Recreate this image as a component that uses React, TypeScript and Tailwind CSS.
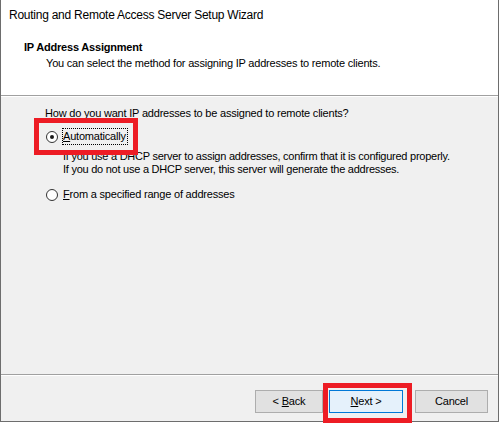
import React from 'react';

const font = { fontFamily: '"Liberation Sans", Arial, sans-serif' };

function Radio({ checked }: { checked?: boolean }) {
  return (
    <span className="flex h-[12px] w-[12px] shrink-0 items-center justify-center rounded-full border border-[#333333] bg-white">
      {checked && <span className="h-[4px] w-[4px] rounded-full bg-[#1a1a1a]" />}
    </span>
  );
}

function Btn({ w, children, primary }: { w: string; children: React.ReactNode; primary?: boolean }) {
  return (
    <div
      className={
        'flex h-[23px] items-center justify-center border text-[11px] tracking-[-0.2px] text-black ' +
        w +
        (primary ? ' border-[#0078d7] bg-[#e5f1fb]' : ' border-[#adadad] bg-[#e1e1e1]')
      }
    >
      {children}
    </div>
  );
}

export default function App() {
  return (
    <div className="relative h-[423px] w-[500px] overflow-hidden bg-white" style={font}>
      <div className="flex h-[422px] w-[499px] flex-col border-x border-b border-[#6d6d6d] bg-[#f0f0f0]">
        {/* title bar */}
        <div className="flex h-[30px] items-center bg-white pl-[8px] text-[12px] tracking-[-0.25px] text-black">
          Routing and Remote Access Server Setup Wizard
        </div>

        {/* header */}
        <div className="h-[65px] bg-white pl-[23px] pt-[9px] text-[11px] leading-[16px] tracking-[-0.2px] text-black">
          <div className="font-bold">IP Address Assignment</div>
          <div className="pl-[22px]">You can select the method for assigning IP addresses to remote clients.</div>
        </div>
        <div className="h-px bg-[#a0a0a0]" />
        <div className="h-px bg-white" />

        {/* body */}
        <div className="flex flex-1 flex-col pl-[44px] pt-[9px] text-[11px] tracking-[-0.2px] text-black">
          <div className="leading-[14px]">How do you want IP addresses to be assigned to remote clients?</div>
          <div className="mt-[8px] flex h-[17px] items-center">
            <span className="ml-px"><Radio checked /></span>
            <span className="ml-[4px] border border-dotted border-black pr-px leading-[15px]">
              <span className="underline">A</span>utomatically
            </span>
          </div>
          <div className="mt-[5px] pl-[18px] leading-[13px] tracking-[-0.25px]">
            <div>If you use a DHCP server to assign addresses, confirm that it is configured properly.</div>
            <div>If you do not use a DHCP server, this server will generate the addresses.</div>
          </div>
          <div className="mt-[10px] flex h-[17px] items-center">
            <span className="ml-px"><Radio /></span>
            <span className="ml-[5px] leading-[15px]">
              <span className="underline">F</span>rom a specified range of addresses
            </span>
          </div>
        </div>

        <div className="h-px bg-[#a0a0a0]" />
        <div className="h-px bg-white" />

        {/* buttons */}
        <div className="flex h-[45px] items-start justify-end pr-[10px] pt-[14px]">
          <Btn w="w-[68px]">
            &lt;&nbsp;<span className="underline">B</span>ack
          </Btn>
          <div className="ml-[6px]">
            <Btn w="w-[74px]" primary>
              <span className="underline">N</span>ext &gt;
            </Btn>
          </div>
          <div className="ml-[12px]">
            <Btn w="w-[73px]">Cancel</Btn>
          </div>
        </div>
      </div>

      {/* annotation boxes */}
      <div className="absolute left-[34px] top-[118px] h-[37px] w-[104px] border-[5px] border-[#ed1c24]" />
      <div className="absolute left-[323px] top-[383px] h-[40px] w-[89px] border-[5px] border-[#ed1c24]" />
    </div>
  );
}
